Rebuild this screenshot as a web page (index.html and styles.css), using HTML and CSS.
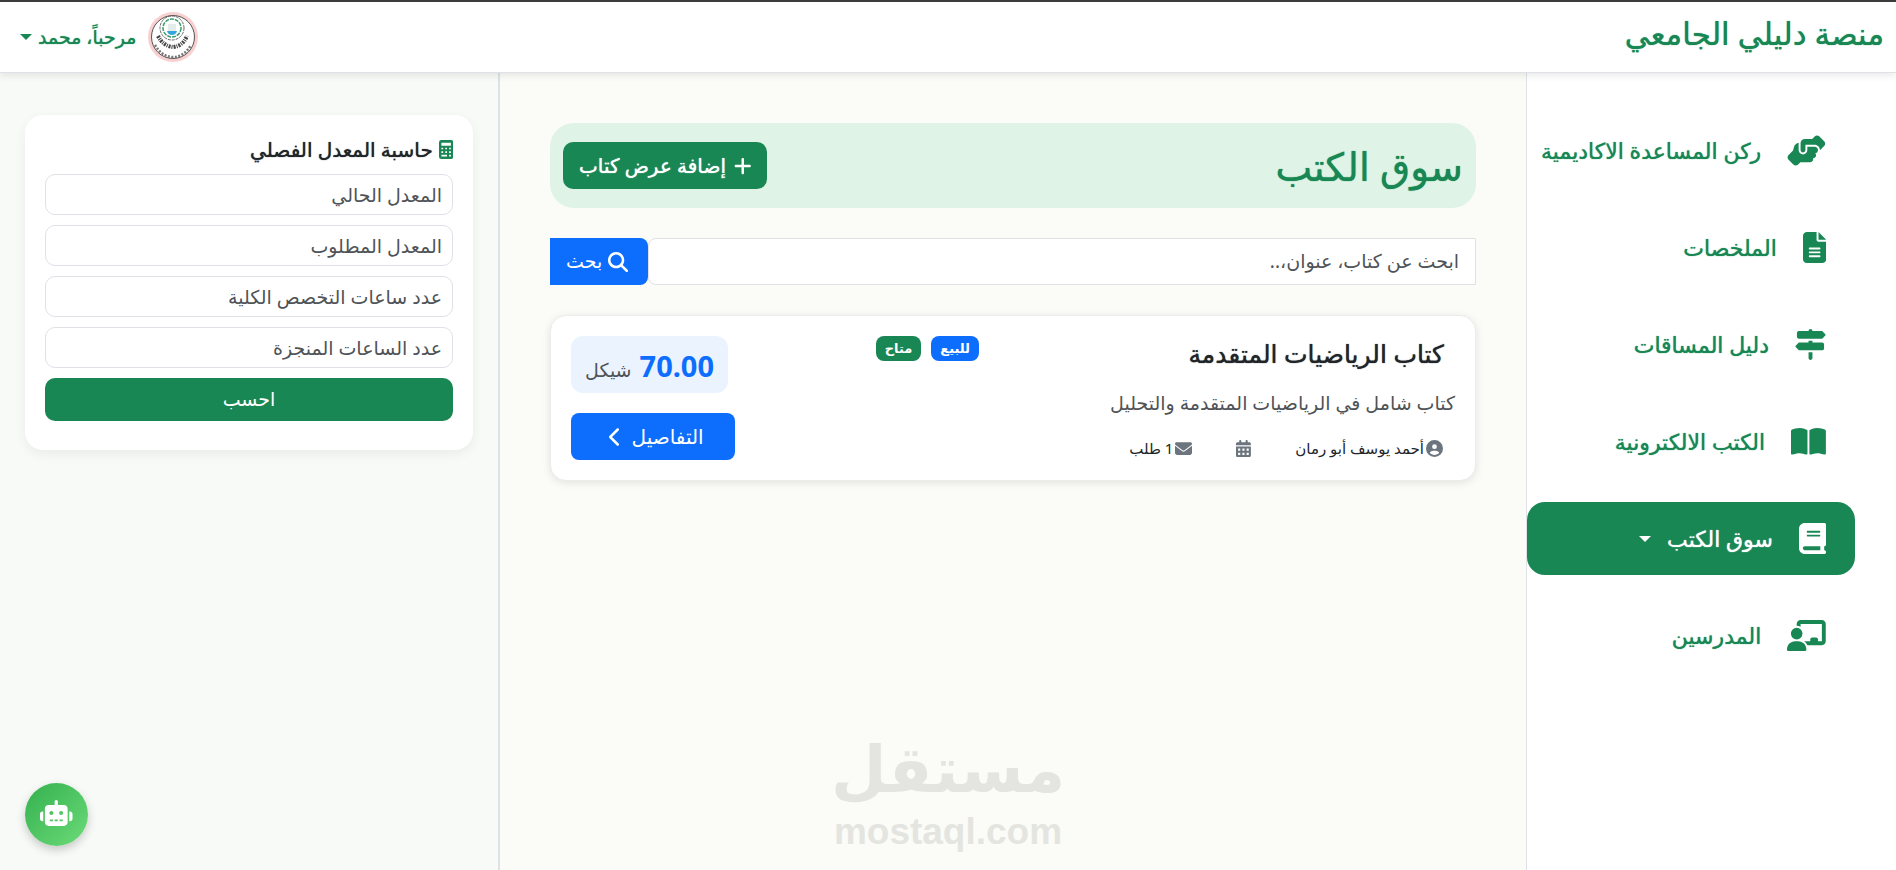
FILE: index.html
```html
<!DOCTYPE html>
<html lang="ar" dir="rtl">
<head>
<meta charset="utf-8">
<title>منصة دليلي الجامعي</title>
<meta name="viewport" content="width=device-width, initial-scale=1">
<link rel="stylesheet" href="styles.css">
</head>
<body>
<header class="topbar">
  <a class="brand" href="#">منصة دليلي الجامعي</a>
  <button class="user" type="button">
    <svg class="avatar" viewBox="0 0 50 50" aria-hidden="true">
      <circle cx="25" cy="25" r="25" fill="#f8d0d0"/>
      <circle cx="25" cy="25" r="21.5" fill="#fff" stroke="#555" stroke-width="1"/>
      <circle cx="24" cy="16" r="12" fill="none" stroke="#666" stroke-width="1" stroke-dasharray="3 1"/>
      <circle cx="24" cy="16" r="9" fill="none" stroke="#3a9c6c" stroke-width="1.5" stroke-dasharray="4 1"/>
      <path d="M20 12h8v8h-8z" fill="#e3ece8"/>
      <path d="M19 19h10q-1 4-5 4t-5-4z" fill="#35a5e0"/>
      <path d="M10 24q5 10 15 11 10-1 14-11" fill="none" stroke="#444" stroke-width="4" stroke-dasharray="2 1 1 1"/>
      <path d="M7 33q7 12 18 12t18-12" fill="none" stroke="#777" stroke-width="2.5" stroke-dasharray="2 1.5"/>
    </svg>
    <span>مرحباً، محمد</span>
    <span class="caret"></span>
  </button>
</header>
<div class="layout">
  <nav class="sidebar">
    <a class="nav-link" href="#">
      <svg class="nav-icon" viewBox="0 0 640 512" aria-hidden="true"><path d="M544 248l0 3.3 69.7-69.7c21.9-21.9 21.9-57.3 0-79.2L535.6 24.4c-21.9-21.9-57.3-21.9-79.2 0L416.3 64.5c-2.7-.3-5.5-.5-8.3-.5L296 64c-37.1 0-67.6 28-71.6 64l-.4 0 0 120c0 22.1 17.9 40 40 40s40-17.9 40-40l0-88 152 0c48.600 0 88 39.400 88 88zM336 192l0 56c0 39.8-32.2 72-72 72s-72-32.2-72-72l0-118.6c-35.9 6.2-65.8 32.3-76 68.2L99.5 255.2 26.3 328.4c-21.9 21.9-21.9 57.3 0 79.2l78.1 78.1c21.9 21.9 57.3 21.9 79.2 0l37.7-37.7c.9 0 1.8 .1 2.7 .1l160 0c26.5 0 48-21.5 48-48c0-5.6-1-11-2.7-16l2.7 0c26.5 0 48-21.5 48-48c0-12.8-5-24.4-13.2-33c25.7-5 45.1-27.6 45.2-54.8l0-.4c-.1-30.8-25.1-55.8-56-55.8l-120 0z"/></svg>
      <span>ركن المساعدة الاكاديمية</span>
    </a>
    <a class="nav-link" href="#">
      <svg class="nav-icon" viewBox="0 0 384 512" aria-hidden="true"><path d="M64 0C28.7 0 0 28.700 0 64L0 448c0 35.300 28.700 64 64 64l256 0c35.300 0 64-28.700 64-64l0-288-128 0c-17.700 0-32-14.300-32-32L224 0 64 0zM256 0l0 128 128 0L256 0zM112 256l160 0c8.800 0 16 7.200 16 16s-7.200 16-16 16l-160 0c-8.800 0-16-7.200-16-16s7.200-16 16-16zm0 64l160 0c8.800 0 16 7.200 16 16s-7.200 16-16 16l-160 0c-8.800 0-16-7.200-16-16s7.200-16 16-16zm0 64l160 0c8.800 0 16 7.200 16 16s-7.200 16-16 16l-160 0c-8.800 0-16-7.200-16-16s7.200-16 16-16z"/></svg>
      <span>الملخصات</span>
    </a>
    <a class="nav-link" href="#">
      <svg class="nav-icon" viewBox="0 0 512 512" aria-hidden="true"><path d="M224 32L64 32C46.300 32 32 46.300 32 64l0 64c0 17.700 14.300 32 32 32l377.400 0c4.200 0 8.300-1.700 11.300-4.700l48-48c6.200-6.200 6.200-16.400 0-22.600l-48-48c-3-3-7.100-4.700-11.300-4.700L288 32c0-17.700-14.300-32-32-32s-32 14.300-32 32zM480 256c0-17.700-14.300-32-32-32l-160 0 0-32-64 0 0 32L70.600 224c-4.200 0-8.300 1.700-11.300 4.700l-48 48c-6.200 6.200-6.200 16.400 0 22.600l48 48c3 3 7.100 4.700 11.300 4.700L448 352c17.700 0 32-14.300 32-32l0-64zM288 480l0-96-64 0 0 96c0 17.700 14.300 32 32 32s32-14.300 32-32z"/></svg>
      <span>دليل المساقات</span>
    </a>
    <a class="nav-link" href="#">
      <svg class="nav-icon" viewBox="0 0 576 512" aria-hidden="true"><path d="M249.600 471.500c10.800 3.800 22.400-4.100 22.400-15.500l0-377.400c0-4.200-1.600-8.400-5-11C247.400 52 202.400 32 144 32C93.500 32 46.300 45.300 18.100 56.100C6.800 60.500 0 71.700 0 83.800L0 454.100c0 11.900 12.800 20.200 24.100 16.500C55.600 460.100 105.500 448 144 448c33.900 0 79 14 105.600 23.500zm76.800 0C353 462 398.100 448 432 448c38.500 0 88.400 12.100 119.900 22.600c11.300 3.800 24.100-4.600 24.100-16.500l0-370.300c0-12.100-6.800-23.300-18.100-27.600C529.700 45.300 482.500 32 432 32c-58.400 0-103.400 20-123 35.600c-3.300 2.600-5 6.800-5 11L304 456c0 11.400 11.700 19.300 22.400 15.500z"/></svg>
      <span>الكتب الالكترونية</span>
    </a>
    <a class="nav-link active" href="#" aria-current="page">
      <svg class="nav-icon" viewBox="0 0 448 512" aria-hidden="true"><path d="M96 0C43 0 0 43 0 96L0 416c0 53 43 96 96 96l288 0 32 0c17.700 0 32-14.300 32-32s-14.300-32-32-32l0-64c17.700 0 32-14.300 32-32l0-320c0-17.700-14.300-32-32-32L384 0 96 0zm0 384l256 0 0 64L96 448c-17.700 0-32-14.300-32-32s14.300-32 32-32zm32-240c0-8.800 7.200-16 16-16l192 0c8.800 0 16 7.200 16 16s-7.200 16-16 16l-192 0c-8.800 0-16-7.200-16-16zm16 48l192 0c8.800 0 16 7.200 16 16s-7.200 16-16 16l-192 0c-8.800 0-16-7.200-16-16s7.200-16 16-16z"/></svg>
      <span>سوق الكتب</span>
      <span class="caret"></span>
    </a>
    <a class="nav-link" href="#">
      <svg class="nav-icon" viewBox="0 0 640 512" aria-hidden="true"><path d="M160 64c0-35.300 28.700-64 64-64L576 0c35.300 0 64 28.700 64 64l0 288c0 35.300-28.700 64-64 64l-239.200 0c-11.800-25.500-29.900-47.500-52.400-64l99.600 0 0-32c0-17.700 14.300-32 32-32l64 0c17.700 0 32 14.300 32 32l0 32 64 0 0-288L224 64l0 49.100C205.200 102.200 183.300 96 160 96l0-32zm0 64a96 96 0 1 1 0 192 96 96 0 1 1 0-192zM133.300 352l53.300 0C260.300 352 320 411.700 320 485.300c0 14.700-11.900 26.700-26.700 26.700L26.700 512C11.900 512 0 500.100 0 485.300C0 411.700 59.700 352 133.300 352z"/></svg>
      <span>المدرسين</span>
    </a>
  </nav>

  <main class="content">
    <section class="banner">
      <h1 class="banner-title">سوق الكتب</h1>
      <button class="btn btn-add" type="button">
        <svg class="plus-icon" viewBox="0 0 448 512" aria-hidden="true"><path d="M256 80c0-17.700-14.300-32-32-32s-32 14.300-32 32l0 144L48 224c-17.700 0-32 14.300-32 32s14.300 32 32 32l144 0 0 144c0 17.700 14.300 32 32 32s32-14.300 32-32l0-144 144 0c17.700 0 32-14.300 32-32s-14.300-32-32-32l-144 0 0-144z"/></svg>
        <span>إضافة عرض كتاب</span>
      </button>
    </section>

    <form class="search">
      <input class="search-input" type="text" aria-label="ابحث عن كتاب" placeholder="ابحث عن كتاب، عنوان،..">
      <button class="search-btn" type="button">
        <svg class="search-icon" viewBox="0 0 512 512" aria-hidden="true"><path d="M416 208c0 45.900-14.900 88.300-40 122.700L502.600 457.400c12.500 12.500 12.500 32.800 0 45.300s-32.800 12.500-45.300 0L330.700 376c-34.400 25.200-76.800 40-122.700 40C93.100 416 0 322.900 0 208S93.100 0 208 0S416 93.100 416 208zM208 352a144 144 0 1 0 0-288 144 144 0 1 0 0 288z"/></svg>
        <span>بحث</span>
      </button>
    </form>

    <article class="book">
      <div class="book-info">
        <h2 class="book-title">كتاب الرياضيات المتقدمة</h2>
        <p class="book-desc">كتاب شامل في الرياضيات المتقدمة والتحليل</p>
        <div class="book-meta">
          <span class="meta"><svg class="meta-icon" viewBox="0 0 512 512" aria-hidden="true"><path d="M399 384.200C376.900 345.800 335.400 320 288 320l-64 0c-47.400 0-88.900 25.800-111 64.200c35.200 39.200 86.200 63.800 143 63.800s107.800-24.700 143-63.800zM0 256a256 256 0 1 1 512 0A256 256 0 1 1 0 256zm256 16a72 72 0 1 0 0-144 72 72 0 1 0 0 144z"/></svg>أحمد يوسف أبو رمان</span>
          <span class="meta"><svg class="meta-icon" viewBox="0 0 448 512" aria-hidden="true"><path fill-rule="evenodd" d="M128 0c17.700 0 32 14.300 32 32l0 32 128 0 0-32c0-17.700 14.300-32 32-32s32 14.300 32 32l0 32 48 0c26.500 0 48 21.500 48 48l0 48L0 160l0-48C0 85.500 21.500 64 48 64l48 0 0-32c0-17.700 14.300-32 32-32zM0 192l448 0 0 272c0 26.500-21.500 48-48 48L48 512c-26.500 0-48-21.500-48-48L0 192zM64 256v64h64v-64zM192 256v64h64v-64zM320 256v64h64v-64zM64 384v64h64v-64zM192 384v64h64v-64zM320 384v64h64v-64z"/></svg></span>
          <span class="meta"><svg class="meta-icon" viewBox="0 0 512 512" aria-hidden="true"><path d="M48 64C21.500 64 0 85.500 0 112c0 15.100 7.100 29.300 19.200 38.400L236.800 313.600c11.400 8.500 27 8.500 38.400 0L492.800 150.400c12.100-9.100 19.200-23.300 19.200-38.400c0-26.500-21.500-48-48-48L48 64zM0 176L0 384c0 35.300 28.700 64 64 64l384 0c35.300 0 64-28.700 64-64l0-208L294.400 339.200c-22.800 17.100-54 17.100-76.800 0L0 176z"/></svg>1 طلب</span>
        </div>
      </div>
      <div class="badges">
        <span class="badge badge-sale">للبيع</span>
        <span class="badge badge-available">متاح</span>
      </div>
      <div class="book-actions">
        <div class="price"><strong class="price-value">70.00</strong><span>شيكل</span></div>
        <button class="btn btn-details" type="button">
          <span>التفاصيل</span>
          <svg class="chevron-icon" viewBox="0 0 320 512" aria-hidden="true"><path d="M9.400 233.400c-12.500 12.500-12.500 32.800 0 45.300l192 192c12.500 12.500 32.800 12.500 45.300 0s12.500-32.800 0-45.300L77.300 256 246.600 86.600c12.500-12.500 12.500-32.800 0-45.300s-32.800-12.500-45.300 0l-192 192z"/></svg>
        </button>
      </div>
    </article>
  </main>

  <aside class="tools">
    <form class="calc">
      <h3 class="calc-title">
        <svg class="calc-icon" viewBox="0 0 384 512" aria-hidden="true"><path fill-rule="evenodd" d="M64 0h256q64 0 64 64v384q0 64-64 64H64q-64 0-64-64V64Q0 0 64 0zM64 72v80h256V72zM64 208v44h48v-44zM168 208v44h48v-44zM272 208v44h48v-44zM64 304v44h48v-44zM168 304v44h48v-44zM272 304v44h48v-44zM64 400v44h152v-44zM272 400v44h48v-44z"/></svg>
        حاسبة المعدل الفصلي
      </h3>
      <input class="calc-input" type="text" aria-label="المعدل الحالي" placeholder="المعدل الحالي">
      <input class="calc-input" type="text" aria-label="المعدل المطلوب" placeholder="المعدل المطلوب">
      <input class="calc-input" type="text" aria-label="عدد ساعات التخصص الكلية" placeholder="عدد ساعات التخصص الكلية">
      <input class="calc-input" type="text" aria-label="عدد الساعات المنجزة" placeholder="عدد الساعات المنجزة">
      <button class="calc-btn" type="button">احسب</button>
    </form>
  </aside>
</div>

<div class="watermark" aria-hidden="true">
  <span class="watermark-ar">مستقل</span>
  <span class="watermark-en">mostaql.com</span>
</div>

<button class="chat" type="button" aria-label="المساعد">
  <svg class="chat-icon" viewBox="0 0 640 512" aria-hidden="true"><path fill-rule="evenodd" d="M320 0c17.700 0 32 14.300 32 32l0 64 120 0c39.800 0 72 32.200 72 72l0 272c0 39.800-32.200 72-72 72l-304 0c-39.800 0-72-32.200-72-72l0-272c0-39.800 32.200-72 72-72l120 0 0-64c0-17.700 14.300-32 32-32zM192 384v32h64v-32zM288 384v32h64v-32zM384 384v32h64v-32zM264 256a40 40 0 1 0 -80 0 40 40 0 1 0 80 0zm152 40a40 40 0 1 0 0-80 40 40 0 1 0 0 80zM48 224l16 0 0 192-16 0c-26.500 0-48-21.500-48-48l0-96c0-26.500 21.500-48 48-48zm544 0c26.500 0 48 21.500 48 48l0 96c0 26.500-21.500 48-48 48l-16 0 0-192 16 0z"/></svg>
</button>
</body>
</html>
```
FILE: styles.css
```css
:root {
  --green: #198754;
  --blue: #0d6efd;
  --text: #212529;
  --muted: #4f5357;
  --line: #dee2e6;
}

* { box-sizing: border-box; }

body {
  margin: 0;
  min-height: 100vh;
  display: flex;
  flex-direction: column;
  font-family: "Noto Sans", "DejaVu Sans", sans-serif;
  font-size: 19px;
  line-height: 1.5;
  color: var(--text);
  background: #fff;
}

button, input { font: inherit; }
button { border: 0; cursor: pointer; }
a { text-decoration: none; }
svg { fill: currentColor; flex: none; }
h1, h2, h3, p { margin: 0; }

/* Arabic faces have no medium weight, so the glyphs are thickened slightly */
.brand, .user, .nav-link, .banner-title, .btn-add, .book-title, .calc-title {
  font-weight: 500;
  text-shadow: 0 0 1px currentColor;
}

.caret {
  border: 6px solid transparent;
  border-top-color: currentColor;
  border-bottom: 0;
}

.topbar {
  display: flex;
  align-items: center;
  justify-content: space-between;
  height: 73px;
  padding: 0 12px 0 20px;
  border-top: 2px solid #3c3c3c;
  border-bottom: 1px solid var(--line);
  background: #fff;
  box-shadow: 0 2px 8px rgba(0, 0, 0, .1);
  z-index: 1;
}

.brand {
  padding-bottom: 8px;
  color: var(--green);
  font-size: 31px;
}

.user {
  display: flex;
  align-items: center;
  gap: 12px;
  padding: 0;
  background: none;
  color: var(--green);
}
.user .caret { margin-right: -6px; }
.avatar { width: 50px; height: 50px; }

.layout {
  flex: 1;
  display: grid;
  grid-template-columns: 370fr 1026fr 500fr;
}

.sidebar {
  display: flex;
  flex-direction: column;
  gap: 24px;
  padding: 41px 41px 24px 0;
  border-left: 1px solid var(--line);
  background: #fff;
}

.nav-link {
  display: flex;
  align-items: center;
  gap: 26px;
  height: 73px;
  padding-right: 29px;
  border-radius: 18px;
  color: var(--green);
  font-size: 22px;
  white-space: nowrap;
}
.nav-link.active { background: var(--green); color: #fff; }
.nav-link .caret { margin-right: -10px; }
.nav-icon { height: 31px; }

.content {
  padding: 50px;
  background: #fbfcf7;
}

.banner {
  display: flex;
  align-items: center;
  justify-content: space-between;
  height: 85px;
  padding: 0 13px;
  border-radius: 24px;
  background: #e0f3e7;
}
.banner-title {
  color: var(--green);
  font-size: 39px;
  line-height: 48px;
}

.btn {
  display: flex;
  align-items: center;
  justify-content: center;
  height: 47px;
  color: #fff;
  font-size: 20px;
}
.btn-add {
  gap: 8px;
  padding: 0 16px;
  border-radius: 10px;
  background: var(--green);
}
.plus-icon { height: 20px; }

.search {
  display: flex;
  height: 47px;
  margin-top: 30px;
}
.search-input {
  flex: 1;
  min-width: 0;
  padding: 0 16px;
  border: 1px solid var(--line);
  border-radius: 8px 0 0 8px;
  background: #fff;
}
.search-input::placeholder, .calc-input::placeholder { color: var(--muted); opacity: 1; }
.search-btn {
  display: flex;
  align-items: center;
  gap: 6px;
  padding: 0 20px 0 16px;
  border-radius: 0 8px 8px 0;
  background: var(--blue);
  color: #fff;
}
.search-icon { height: 20px; }

.book {
  display: grid;
  grid-template-columns: 7fr 2fr 4fr;
  margin-top: 30px;
  padding: 20px;
  border: 1px solid #ecedea;
  border-radius: 16px;
  background: #fff;
  box-shadow: 0 2px 8px rgba(0, 0, 0, .1);
}
.book-title {
  padding-right: 11px;
  font-size: 25px;
  line-height: 34px;
}
.book-desc {
  margin-top: 16px;
  color: var(--muted);
  line-height: 34px;
  white-space: nowrap;
}
.book-meta {
  display: flex;
  gap: 44px;
  margin-top: 18px;
  padding-right: 12px;
  font-size: 15px;
  line-height: 20px;
}
.meta {
  display: flex;
  align-items: center;
  gap: 2px;
}
.meta-icon { height: 17px; color: #6c757d; }

.badges {
  display: flex;
  align-items: flex-start;
  gap: 10px;
}
.badge {
  height: 25px;
  padding: 0 9px;
  border-radius: 8px;
  color: #fff;
  font-size: 13px;
  font-weight: 700;
  line-height: 25px;
}
.badge-sale { background: var(--blue); }
.badge-available { background: var(--green); }

.book-actions {
  display: flex;
  flex-direction: column;
  align-items: flex-end;
  gap: 20px;
}
.price {
  display: flex;
  align-items: baseline;
  gap: 8px;
  height: 57px;
  padding: 8px 14px;
  border-radius: 12px;
  background: #ebf3ff;
  color: var(--muted);
}
.price-value {
  color: var(--blue);
  font-size: 29px;
}
.btn-details {
  gap: 10px;
  padding: 0 31px 0 38px;
  border-radius: 8px;
  background: var(--blue);
}
.chevron-icon { height: 20px; }

.tools {
  padding: 42px 25px;
  border-right: 2px solid var(--line);
  background: #f8faf7;
}
.calc {
  display: flex;
  flex-direction: column;
  gap: 10px;
  padding: 20px 20px 29px;
  border-radius: 18px;
  background: #fff;
  box-shadow: 0 4px 12px rgba(0, 0, 0, .06);
}
.calc-title {
  display: flex;
  align-items: center;
  gap: 6px;
  height: 29px;
  font-size: 20px;
}
.calc-icon { height: 19px; color: var(--green); }
.calc-input {
  height: 41px;
  padding: 0 10px;
  border: 1px solid var(--line);
  border-radius: 10px;
}
.calc-btn {
  height: 43px;
  border-radius: 10px;
  background: var(--green);
  color: #fff;
}

.watermark {
  position: absolute;
  bottom: 16px;
  left: 0;
  right: 0;
  display: flex;
  flex-direction: column;
  align-items: center;
  color: #e4e5e0;
  font-weight: 700;
  pointer-events: none;
}
.watermark-ar {
  font-family: "DejaVu Sans", sans-serif;
  font-size: 64px;
  line-height: 80px;
}
.watermark-en {
  font-family: "Liberation Sans", sans-serif;
  font-size: 37px;
  line-height: 44px;
}

.chat {
  position: fixed;
  left: 25px;
  bottom: 24px;
  display: grid;
  place-items: center;
  width: 63px;
  height: 63px;
  padding: 0 0 4px;
  border-radius: 50%;
  background: linear-gradient(135deg, #34b04f, #6cdb78);
  color: #fff;
  box-shadow: 0 4px 10px rgba(0, 0, 0, .2);
}
.chat-icon { height: 26px; }
```
